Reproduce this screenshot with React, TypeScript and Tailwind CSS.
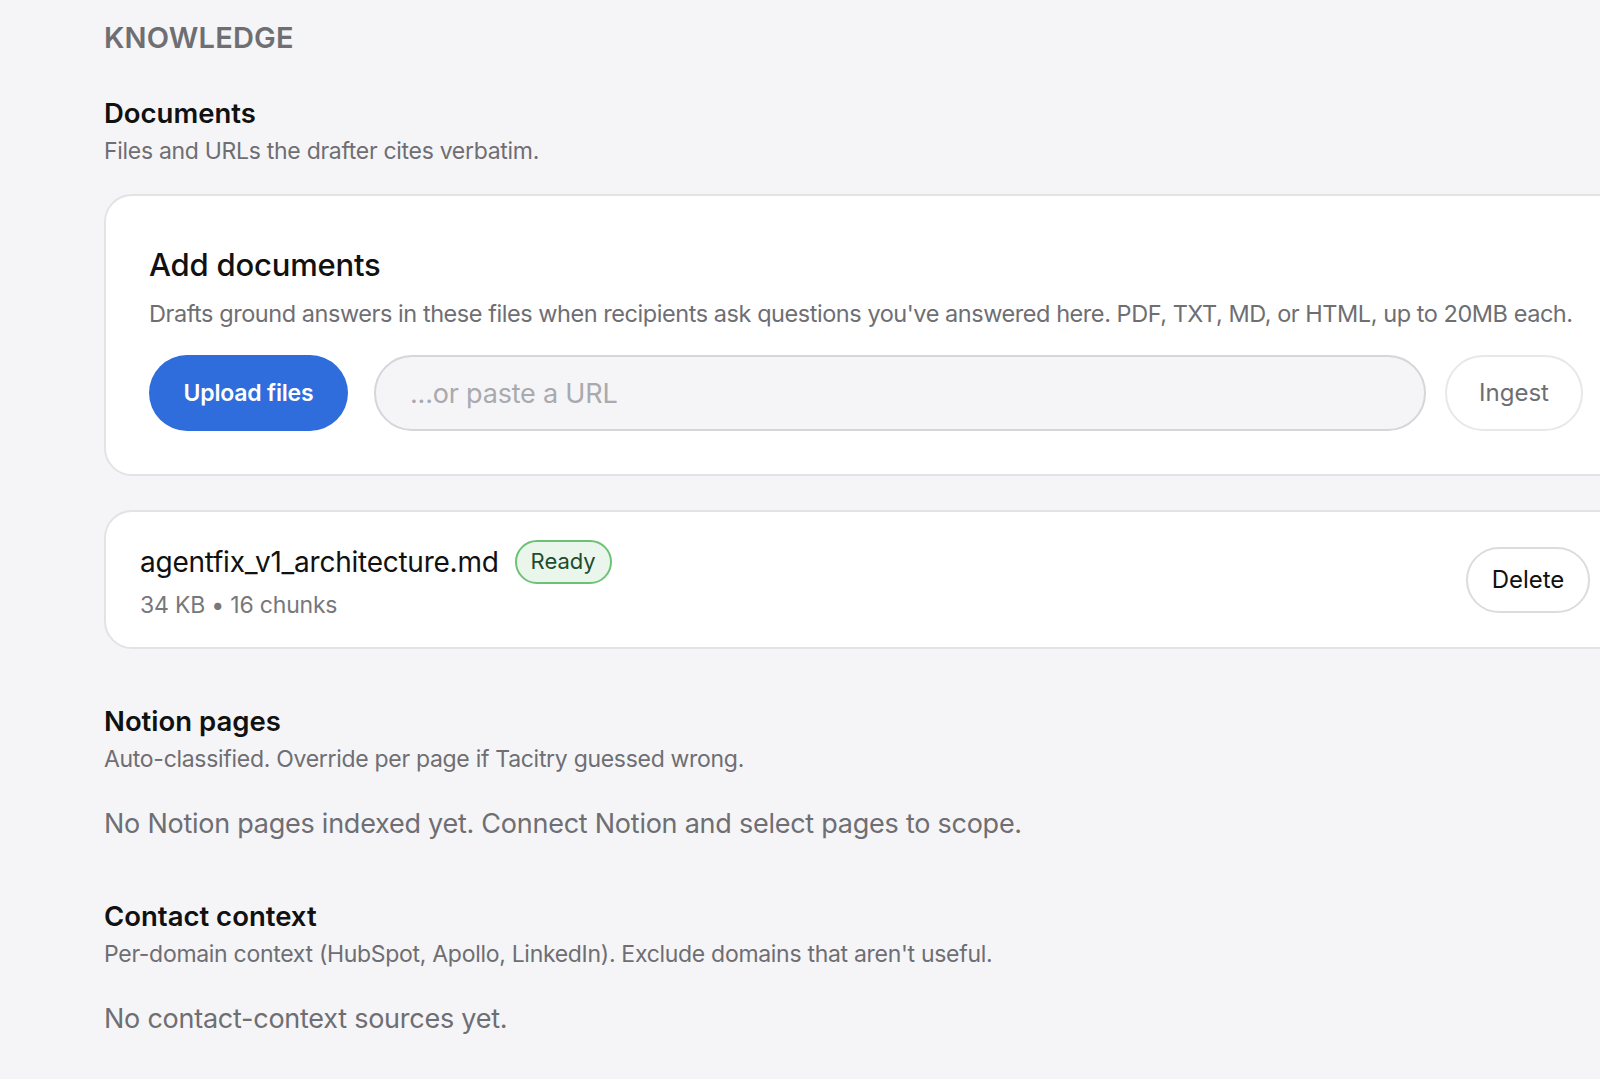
import { useState } from 'react';

const font = { fontFamily: 'Inter, "Noto Sans", sans-serif' };

function SectionHeader({ title, subtitle }: { title: string; subtitle: string }) {
    return (
        <div>
            <h2 className="text-[27.5px] leading-[32px] font-semibold text-[#111111]">{title}</h2>
            <p className="mt-[7px] text-[23px] leading-[30px] tracking-[-0.3px] text-[#6e6e73]">{subtitle}</p>
        </div>
    );
}

export default function App() {
    const [url, setUrl] = useState('');
    const docs = [{ name: 'agentfix_v1_architecture.md', size: '34 KB', chunks: 16, status: 'Ready' }];

    return (
        <div className="min-h-screen w-full overflow-hidden bg-[#f5f5f7]" style={font}>
            <div className="ml-[104px] w-[1523px] pt-[20px] pb-10">
                <h1 className="text-[29px] leading-[36px] font-semibold text-[#6e6e73] tracking-[0.2px]">KNOWLEDGE</h1>

                <div className="mt-[41px]">
                    <SectionHeader title="Documents" subtitle="Files and URLs the drafter cites verbatim." />
                </div>

                <div className="mt-[28px] rounded-[28px] border-2 border-[#e3e3e6] bg-white px-[43px] pt-[50px] pb-[43px]">
                    <h3 className="text-[31px] leading-[38px] font-medium tracking-[-0.2px] text-[#111111]">Add documents</h3>
                    <p className="mt-[14px] text-[23.5px] leading-[32px] tracking-[-0.45px] text-[#6e6e73]">
                        Drafts ground answers in these files when recipients ask questions you've answered here. PDF, TXT, MD, or HTML, up to 20MB each.
                    </p>
                    <div className="mt-[25px] flex items-center">
                        <button className="h-[76px] w-[199px] shrink-0 rounded-full bg-[#2f6ddc] text-[23px] font-semibold tracking-[-0.2px] text-white">
                            Upload files
                        </button>
                        <input
                            value={url}
                            onChange={(e) => setUrl(e.target.value)}
                            placeholder="...or paste a URL"
                            className="ml-[26px] h-[76px] w-[1052px] shrink-0 rounded-full border-2 border-[#d6d6da] bg-[#f5f5f7] px-[34px] text-[27px] tracking-[-0.2px] text-[#111111] placeholder:text-[#a9a9ae] outline-none"
                        />
                        <button className="ml-[19px] h-[76px] w-[138px] shrink-0 rounded-full border-2 border-[#e8e8ea] bg-white text-[24px] text-[#6e6e73]">
                            Ingest
                        </button>
                    </div>
                </div>

                <div className="mt-[34px] flex flex-col gap-4">
                    {docs.map((doc) => (
                        <div key={doc.name} className="flex h-[139px] items-center justify-between rounded-[28px] border-2 border-[#e3e3e6] bg-white pl-[34px] pr-[35px]">
                            <div>
                                <div className="flex items-center">
                                    <span className="text-[28px] leading-[36px] tracking-[-0.25px] text-[#111111]">{doc.name}</span>
                                    <span className="ml-[16px] inline-flex h-[44px] items-center rounded-full border-2 border-[#6cc274] bg-[#eaf6ec] px-[14px] text-[22px] text-[#1e4d2b]">
                                        {doc.status}
                                    </span>
                                </div>
                                <div className="mt-[6px] text-[23px] leading-[30px] tracking-[-0.2px] text-[#77777c]">
                                    {doc.size} • {doc.chunks} chunks
                                </div>
                            </div>
                            <button className="h-[66px] w-[124px] rounded-full border-2 border-[#dcdcdf] bg-white text-[24px] text-[#111111]">
                                Delete
                            </button>
                        </div>
                    ))}
                </div>

                <div className="mt-[56px]">
                    <SectionHeader title="Notion pages" subtitle="Auto-classified. Override per page if Tacitry guessed wrong." />
                    <p className="mt-[32px] text-[27px] leading-[36px] tracking-[-0.25px] text-[#6e6e73]">
                        No Notion pages indexed yet. Connect Notion and select pages to scope.
                    </p>
                </div>

                <div className="mt-[58px]">
                    <SectionHeader title="Contact context" subtitle="Per-domain context (HubSpot, Apollo, LinkedIn). Exclude domains that aren't useful." />
                    <p className="mt-[32px] text-[27px] leading-[36px] tracking-[-0.25px] text-[#6e6e73]">No contact-context sources yet.</p>
                </div>
            </div>
        </div>
    );
}
